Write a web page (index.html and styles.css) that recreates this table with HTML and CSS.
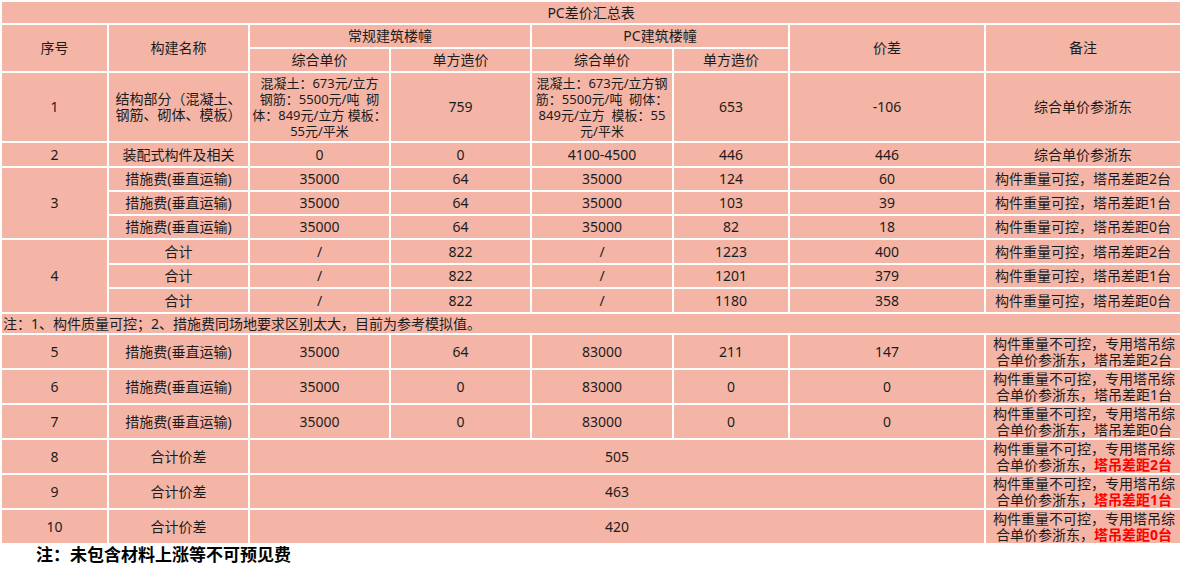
FILE: index.html
```html
<!DOCTYPE html>
<html lang="zh-CN">
<head>
<meta charset="utf-8">
<title>PC差价汇总表</title>
<link rel="stylesheet" href="styles.css">
</head>
<body>
<table class="sheet">
  <colgroup>
    <col class="c-no"><col class="c-name"><col class="c-a"><col class="c-b"><col class="c-c"><col class="c-d"><col class="c-diff"><col class="c-note">
  </colgroup>
  <tr class="r-title"><td colspan="8">PC差价汇总表</td></tr>
  <tr class="r-h1"><td rowspan="2">序号</td><td rowspan="2">构建名称</td><td colspan="2">常规建筑楼幢</td><td colspan="2">PC建筑楼幢</td><td rowspan="2">价差</td><td rowspan="2">备注</td></tr>
  <tr class="r-h2"><td>综合单价</td><td>单方造价</td><td>综合单价</td><td>单方造价</td></tr>
  <tr class="r-big">
    <td>1</td>
    <td><span class="ln">结构部分（混凝土、</span><span class="ln">钢筋、砌体、模板）</span></td>
    <td class="dense"><span class="ln">混凝土：673元/立方</span><span class="ln">钢筋：5500元/吨&nbsp; 砌</span><span class="ln">体：849元/立方 模板：</span><span class="ln">55元/平米</span></td>
    <td>759</td>
    <td class="dense"><span class="ln">混凝土：673元/立方钢</span><span class="ln">筋：5500元/吨&nbsp; 砌体：</span><span class="ln">849元/立方&nbsp; 模板：55</span><span class="ln">元/平米</span></td>
    <td>653</td>
    <td>-106</td>
    <td>综合单价参浙东</td>
  </tr>
  <tr class="r-s2"><td>2</td><td>装配式构件及相关</td><td>0</td><td>0</td><td>4100-4500</td><td>446</td><td>446</td><td>综合单价参浙东</td></tr>
  <tr class="r-s"><td rowspan="3">3</td><td>措施费(垂直运输)</td><td>35000</td><td>64</td><td>35000</td><td>124</td><td>60</td><td>构件重量可控，塔吊差距2台</td></tr>
  <tr class="r-s"><td>措施费(垂直运输)</td><td>35000</td><td>64</td><td>35000</td><td>103</td><td>39</td><td>构件重量可控，塔吊差距1台</td></tr>
  <tr class="r-s"><td>措施费(垂直运输)</td><td>35000</td><td>64</td><td>35000</td><td>82</td><td>18</td><td>构件重量可控，塔吊差距0台</td></tr>
  <tr class="r-s2"><td rowspan="3">4</td><td>合计</td><td>/</td><td>822</td><td>/</td><td>1223</td><td>400</td><td>构件重量可控，塔吊差距2台</td></tr>
  <tr class="r-s"><td>合计</td><td>/</td><td>822</td><td>/</td><td>1201</td><td>379</td><td>构件重量可控，塔吊差距1台</td></tr>
  <tr class="r-s2"><td>合计</td><td>/</td><td>822</td><td>/</td><td>1180</td><td>358</td><td>构件重量可控，塔吊差距0台</td></tr>
  <tr class="r-note"><td colspan="8" class="left">注：1、构件质量可控；2、措施费同场地要求区别太大，目前为参考模拟值。</td></tr>
  <tr class="r-m"><td>5</td><td>措施费(垂直运输)</td><td>35000</td><td>64</td><td>83000</td><td>211</td><td>147</td><td class="rem"><span class="ln">构件重量不可控，专用塔吊综</span><span class="ln">合单价参浙东，塔吊差距2台</span></td></tr>
  <tr class="r-m"><td>6</td><td>措施费(垂直运输)</td><td>35000</td><td>0</td><td>83000</td><td>0</td><td>0</td><td class="rem"><span class="ln">构件重量不可控，专用塔吊综</span><span class="ln">合单价参浙东，塔吊差距1台</span></td></tr>
  <tr class="r-m"><td>7</td><td>措施费(垂直运输)</td><td>35000</td><td>0</td><td>83000</td><td>0</td><td>0</td><td class="rem"><span class="ln">构件重量不可控，专用塔吊综</span><span class="ln">合单价参浙东，塔吊差距0台</span></td></tr>
  <tr class="r-m"><td>8</td><td>合计价差</td><td colspan="5">505</td><td class="rem"><span class="ln">构件重量不可控，专用塔吊综</span><span class="ln">合单价参浙东，<b class="red">塔吊差距2台</b></span></td></tr>
  <tr class="r-m"><td>9</td><td>合计价差</td><td colspan="5">463</td><td class="rem"><span class="ln">构件重量不可控，专用塔吊综</span><span class="ln">合单价参浙东，<b class="red">塔吊差距1台</b></span></td></tr>
  <tr class="r-m"><td>10</td><td>合计价差</td><td colspan="5">420</td><td class="rem"><span class="ln">构件重量不可控，专用塔吊综</span><span class="ln">合单价参浙东，<b class="red">塔吊差距0台</b></span></td></tr>
</table>
<p class="foot">注：未包含材料上涨等不可预见费</p>
</body>
</html>
```

FILE: styles.css
```css
html, body {
  margin: 0;
  padding: 0;
  background: #ffffff;
}

body {
  font-family: "Noto Sans", "Noto Sans CJK SC", sans-serif;
  color: #1c1c1c;
}

.sheet {
  border-collapse: collapse;
  table-layout: fixed;
  width: 1180px;
  background: #f4b5a7;
  font-size: 14px;
  line-height: 16px;
}

.sheet td {
  border: 2px solid #ffffff;
  padding: 0;
  text-align: center;
  vertical-align: middle;
  overflow: hidden;
  white-space: nowrap;
}

.sheet td.left {
  text-align: left;
  padding-left: 1px;
}

.sheet td.dense {
  font-size: 13px;
}

.sheet td.rem {
  padding-left: 2px;
}

.c-no { width: 107px; }
.c-name { width: 141px; }
.c-a { width: 141px; }
.c-b { width: 141px; }
.c-c { width: 142px; }
.c-d { width: 116px; }
.c-diff { width: 196px; }
.c-note { width: 196px; }

.ln {
  display: block;
  white-space: nowrap;
}

.r-title { height: 23px; }
.r-h1 { height: 24px; }
.r-h2 { height: 24px; }
.r-big { height: 70px; }
.r-s { height: 24px; }
.r-s2 { height: 25px; }
.r-note { height: 21px; }
.r-m { height: 35px; }

.red {
  color: #ff0000;
  font-weight: bold;
}

.foot {
  margin: 0;
  padding: 1px 0 0 36px;
  font-size: 17px;
  line-height: 18px;
  font-weight: bold;
  color: #000000;
}
```
